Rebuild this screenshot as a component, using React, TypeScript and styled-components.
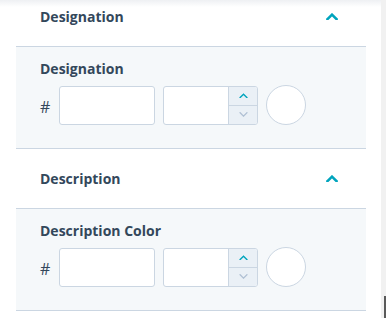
import * as React from 'react';
import styled, { createGlobalStyle } from 'styled-components';

const GlobalStyle = createGlobalStyle`
  html, body {
    margin: 0;
    padding: 0;
    background: #ffffff;
    font-family: "Open Sans", "Noto Sans", sans-serif;
    color: #33475b;
  }
  * { box-sizing: border-box; }
`;

const Page = styled.div`
  position: relative;
  width: 386px;
  height: 318px;
  overflow: hidden;
  display: flex;
  background: #fff;
`;

const TopShade = styled.div`
  position: absolute;
  left: 0;
  top: 0;
  right: 5px;
  height: 7px;
  background: linear-gradient(#eef0f3, rgba(255, 255, 255, 0));
`;

const Content = styled.div`
  flex: 1;
  padding: 0 15px 0 16px;
`;

const Scrollbar = styled.div`
  width: 5px;
  background: #f1f1f1;
  display: flex;
  flex-direction: column;
  justify-content: flex-end;
  align-items: flex-end;
`;

const Thumb = styled.div`
  width: 2px;
  height: 22px;
  background: #5a5a5a;
`;

const Section = styled.section`
  border-bottom: 1px solid #cbd6e2;
`;

const Header = styled.div<{ $first?: boolean }>`
  height: 60px;
  display: flex;
  align-items: center;
  justify-content: space-between;
  padding: 0 28px 0 24px;
  margin-top: ${(p) => (p.$first ? '-13px' : '0')};
  border-bottom: 1px solid #cbd6e2;
`;

const Title = styled.h3`
  margin: 0;
  font-size: 14px;
  font-weight: 700;
  color: #33475b;
`;

const Body = styled.div`
  background: #f5f8fa;
  padding: 12px 24px 0;
  height: 101px;
`;

const Label = styled.div`
  font-size: 14px;
  font-weight: 700;
  line-height: 19px;
  margin-bottom: 7px;
`;

const Row = styled.div`
  display: flex;
  align-items: center;
`;

const Hash = styled.span`
  width: 19px;
  font-size: 16px;
  color: #33475b;
  padding-top: 3px;
`;

const TextBox = styled.div`
  width: 96px;
  height: 39px;
  background: #fff;
  border: 1px solid #cbd6e2;
  border-radius: 3px;
  margin-right: 8px;
`;

const NumBox = styled.div`
  width: 95px;
  height: 39px;
  background: #fff;
  border: 1px solid #cbd6e2;
  border-radius: 3px;
  display: flex;
  overflow: hidden;
  margin-right: 8px;
`;

const NumField = styled.div`
  flex: 1;
`;

const Stepper = styled.div`
  width: 29px;
  border-left: 1px solid #cbd6e2;
  display: flex;
  flex-direction: column;
`;

const StepBtn = styled.div`
  flex: 1;
  background: #eaf0f6;
  display: flex;
  align-items: center;
  justify-content: center;
  & + & {
    border-top: 1px solid #cbd6e2;
  }
`;

const Swatch = styled.div`
  width: 40px;
  height: 40px;
  border-radius: 50%;
  background: #fff;
  border: 1px solid #cbd6e2;
`;

const Chevron: React.FC<{ up?: boolean; color: string; size?: number; w?: number }> = ({ up, color, size = 12, w = 2.6 }) => (
  <svg width={size} height={size * 0.6} viewBox="0 0 12 7" fill="none">
    <path
      d={up ? 'M1.5 6 L6 1.6 L10.5 6' : 'M1.5 1 L6 5.4 L10.5 1'}
      stroke={color}
      strokeWidth={w}
      strokeLinecap="square"
    />
  </svg>
);

const ColorRow: React.FC = () => (
  <Row>
    <Hash>#</Hash>
    <TextBox />
    <NumBox>
      <NumField />
      <Stepper>
        <StepBtn><Chevron up color="#00a4bd" size={9} w={1.8} /></StepBtn>
        <StepBtn><Chevron color="#b0c1d4" size={9} w={1.8} /></StepBtn>
      </Stepper>
    </NumBox>
    <Swatch />
  </Row>
);

const Panel: React.FC<{ title: string; label: string; first?: boolean }> = ({ title, label, first }) => (
  <Section>
    <Header $first={first}>
      <Title>{title}</Title>
      <Chevron up color="#00a4bd" />
    </Header>
    <Body>
      <Label>{label}</Label>
      <ColorRow />
    </Body>
  </Section>
);

const App: React.FC = () => (
  <>
    <GlobalStyle />
    <Page>
      <TopShade />
      <Content>
        <Panel first title="Designation" label="Designation" />
        <Panel title="Description" label="Description Color" />
      </Content>
      <Scrollbar>
        <Thumb />
      </Scrollbar>
    </Page>
  </>
);

export default App;
